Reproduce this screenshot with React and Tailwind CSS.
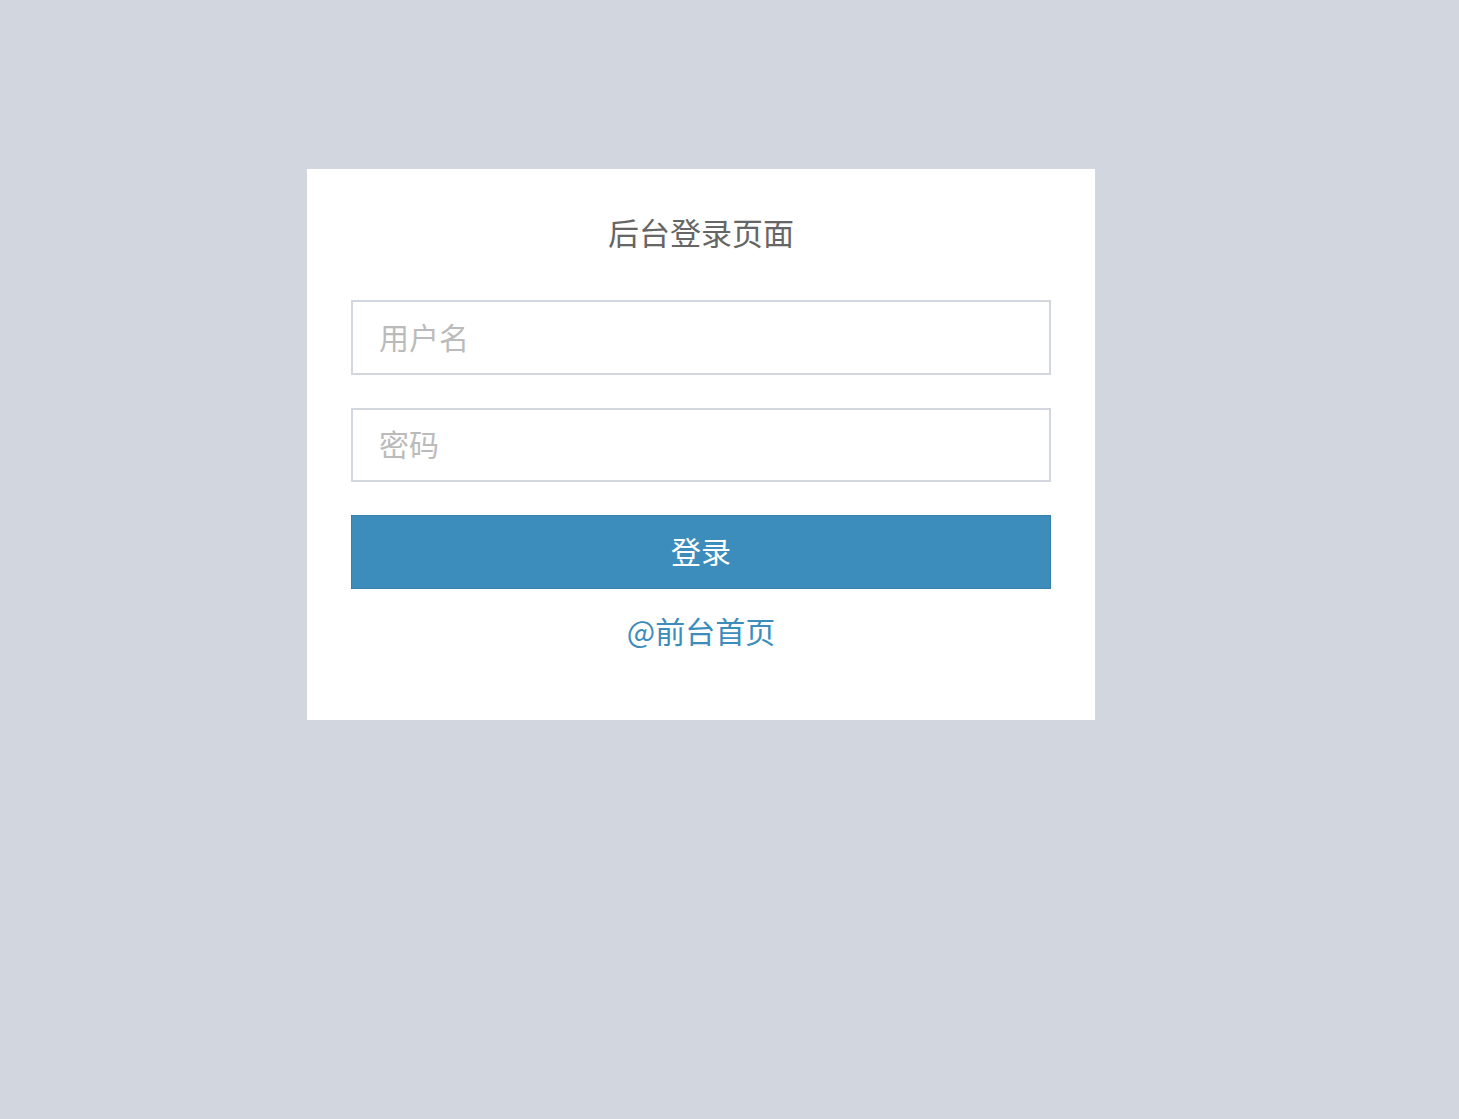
export default function App() {
  const font = { fontFamily: '"Noto Sans CJK SC", "Liberation Sans", sans-serif' };
  return (
    <div className="min-h-[1119px] w-full bg-[#d2d6de] pt-[169px]" style={font}>
      <div className="ml-[307px] w-[788px] bg-white px-[44px] pt-[41px] pb-[70px]">
        <h1 className="text-center text-[31px] leading-[44px] font-normal text-[#666]">后台登录页面</h1>
        <form className="mt-[46px] flex flex-col" onSubmit={(e) => e.preventDefault()}>
          <input
            type="text"
            placeholder="用户名"
            className="h-[75px] w-full border-2 border-[#d2d6de] bg-white px-[26px] pb-[4px] text-[30px] text-[#555] outline-none placeholder:text-[#bbb]"
          />
          <input
            type="password"
            placeholder="密码"
            className="mt-[33px] h-[74px] w-full border-2 border-[#d2d6de] bg-white px-[26px] pb-[4px] text-[30px] text-[#555] outline-none placeholder:text-[#bbb]"
          />
          <button
            type="submit"
            className="mt-[33px] h-[74px] w-full border border-[#367fa9] bg-[#3c8dbc] pb-[4px] text-[30px] text-white"
          >
            登录
          </button>
        </form>
        <div className="mt-[21px] text-center">
          <a href="#" className="text-[30px] leading-[40px] text-[#3c8dbc]">@前台首页</a>
        </div>
      </div>
    </div>
  );
}
